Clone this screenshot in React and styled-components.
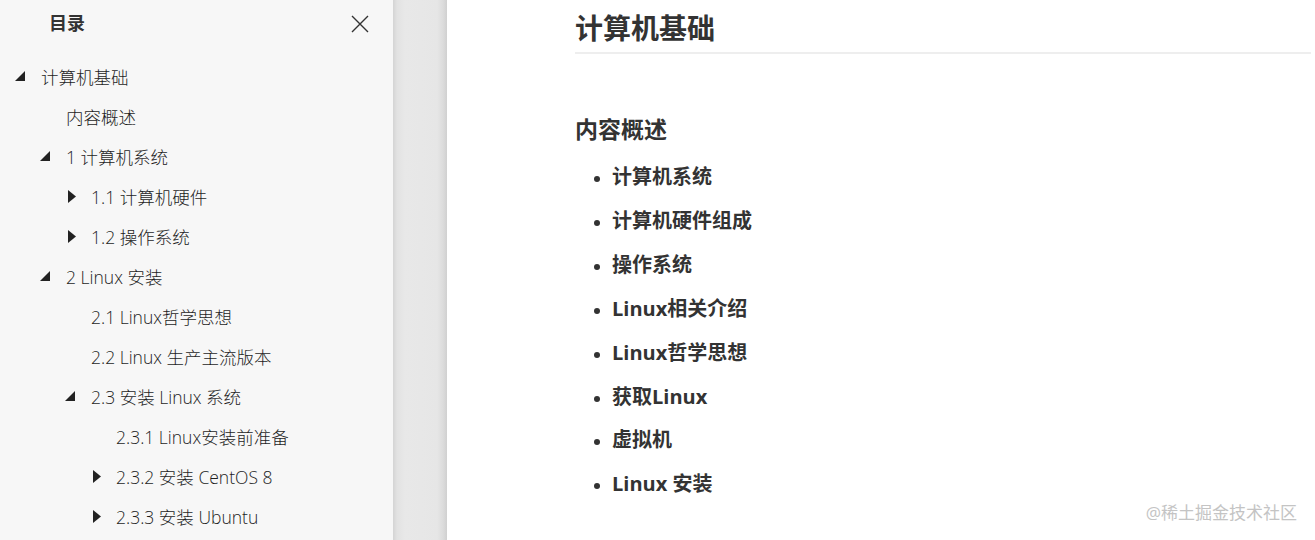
import React from 'react'
import styled, { createGlobalStyle } from 'styled-components'

const GlobalStyle = createGlobalStyle`
  html, body {
    margin: 0;
    padding: 0;
    height: 540px;
    overflow: hidden;
    background: #fff;
  }
  body {
    font-family: "Open Sans", "Noto Sans CJK SC", sans-serif;
    color: #333;
  }
`

const toc = [
  { level: 0, text: '计算机基础', state: 'open' },
  { level: 1, text: '内容概述' },
  { level: 1, text: '1 计算机系统', state: 'open' },
  { level: 2, text: '1.1 计算机硬件', state: 'closed' },
  { level: 2, text: '1.2 操作系统', state: 'closed' },
  { level: 1, text: '2 Linux 安装', state: 'open' },
  { level: 2, text: '2.1 Linux哲学思想' },
  { level: 2, text: '2.2 Linux 生产主流版本' },
  { level: 2, text: '2.3 安装 Linux 系统', state: 'open' },
  { level: 3, text: '2.3.1 Linux安装前准备' },
  { level: 3, text: '2.3.2 安装 CentOS 8', state: 'closed' },
  { level: 3, text: '2.3.3 安装 Ubuntu', state: 'closed' },
]

const points = [
  '计算机系统',
  '计算机硬件组成',
  '操作系统',
  'Linux相关介绍',
  'Linux哲学思想',
  '获取Linux',
  '虚拟机',
  'Linux 安装',
]

const Arrow = ({ state }) => {
  if (state === 'open') {
    return (
      <svg width="10" height="10" viewBox="0 0 10 10">
        <polygon points="10,0 10,10 0,10" fill="#222" />
      </svg>
    )
  }
  if (state === 'closed') {
    return (
      <svg width="8" height="13" viewBox="0 0 8 13" style={{ marginLeft: 3 }}>
        <polygon points="0,0 8,6.5 0,13" fill="#222" />
      </svg>
    )
  }
  return null
}

const App = () => {
  return (
    <Page>
      <GlobalStyle />
      <Sidebar>
        <SideHeader>
          <SideTitle>目录</SideTitle>
          <CloseBtn>
            <svg width="18" height="18" viewBox="0 0 18 18">
              <path d="M1 1 L17 17 M17 1 L1 17" stroke="#333" strokeWidth="1.4" />
            </svg>
          </CloseBtn>
        </SideHeader>
        <Tree>
          {toc.map((item, i) => (
            <TreeRow key={i} level={item.level}>
              <Toggle>
                <Arrow state={item.state} />
              </Toggle>
              <RowText>{item.text}</RowText>
            </TreeRow>
          ))}
        </Tree>
      </Sidebar>
      <Gutter />
      <Main>
        <Content>
          <Title>计算机基础</Title>
          <Subtitle>内容概述</Subtitle>
          <Points>
            {points.map((p) => (
              <Point key={p}>{p}</Point>
            ))}
          </Points>
        </Content>
        <Watermark>@稀土掘金技术社区</Watermark>
      </Main>
    </Page>
  )
}

const Page = styled.div`
  display: flex;
  width: 1315px;
  height: 540px;
  overflow: hidden;
`

const Sidebar = styled.aside`
  width: 393px;
  flex-shrink: 0;
  background: #f7f7f7;
  display: flex;
  flex-direction: column;
`

const SideHeader = styled.div`
  height: 44px;
  display: flex;
  align-items: center;
  justify-content: space-between;
  padding: 0 24px 0 49px;
`

const SideTitle = styled.div`
  font-size: 18px;
  font-weight: 700;
  color: #333;
`

const CloseBtn = styled.div`
  display: flex;
  align-items: center;
  padding-top: 4px;
`

const Tree = styled.div`
  padding-top: 12px;
`

const TreeRow = styled.div`
  height: 40px;
  display: flex;
  align-items: center;
  padding-left: ${(p) => 15 + p.level * 25}px;
`

const Toggle = styled.span`
  width: 26px;
  display: flex;
  align-items: center;
`

const RowText = styled.span`
  font-size: 17.5px;
  font-weight: 300;
  color: #1e1e1e;
  white-space: nowrap;
`

const Gutter = styled.div`
  width: 54px;
  flex-shrink: 0;
  background: linear-gradient(
    to right,
    #d4d4d4 0px,
    #e2e2e2 4px,
    #e8e8e8 12px,
    #e6e6e6 44px,
    #dcdcdc 50px,
    #d0d0d0 54px
  );
`

const Main = styled.main`
  flex: 1;
  background: #fff;
  position: relative;
`

const Content = styled.div`
  padding: 0 4px 0 128px;
`

const Title = styled.h1`
  margin: 0;
  padding-top: 8px;
  font-size: 28px;
  line-height: 40px;
  font-weight: 700;
  color: #333;
  border-bottom: 2px solid #eee;
  padding-bottom: 4px;
`

const Subtitle = styled.h2`
  margin: 57px 0 0;
  font-size: 23px;
  line-height: 36px;
  font-weight: 700;
  color: #333;
`

const Points = styled.ul`
  margin: 8px 0 0;
  padding-left: 37px;
`

const Point = styled.li`
  font-size: 20px;
  font-weight: 700;
  line-height: 43.9px;
  color: #333;
  &::marker {
    font-size: 16px;
  }
`

const Watermark = styled.div`
  position: absolute;
  right: 18px;
  bottom: 16px;
  font-size: 17px;
  color: #c4c4c4;
`

export default App
